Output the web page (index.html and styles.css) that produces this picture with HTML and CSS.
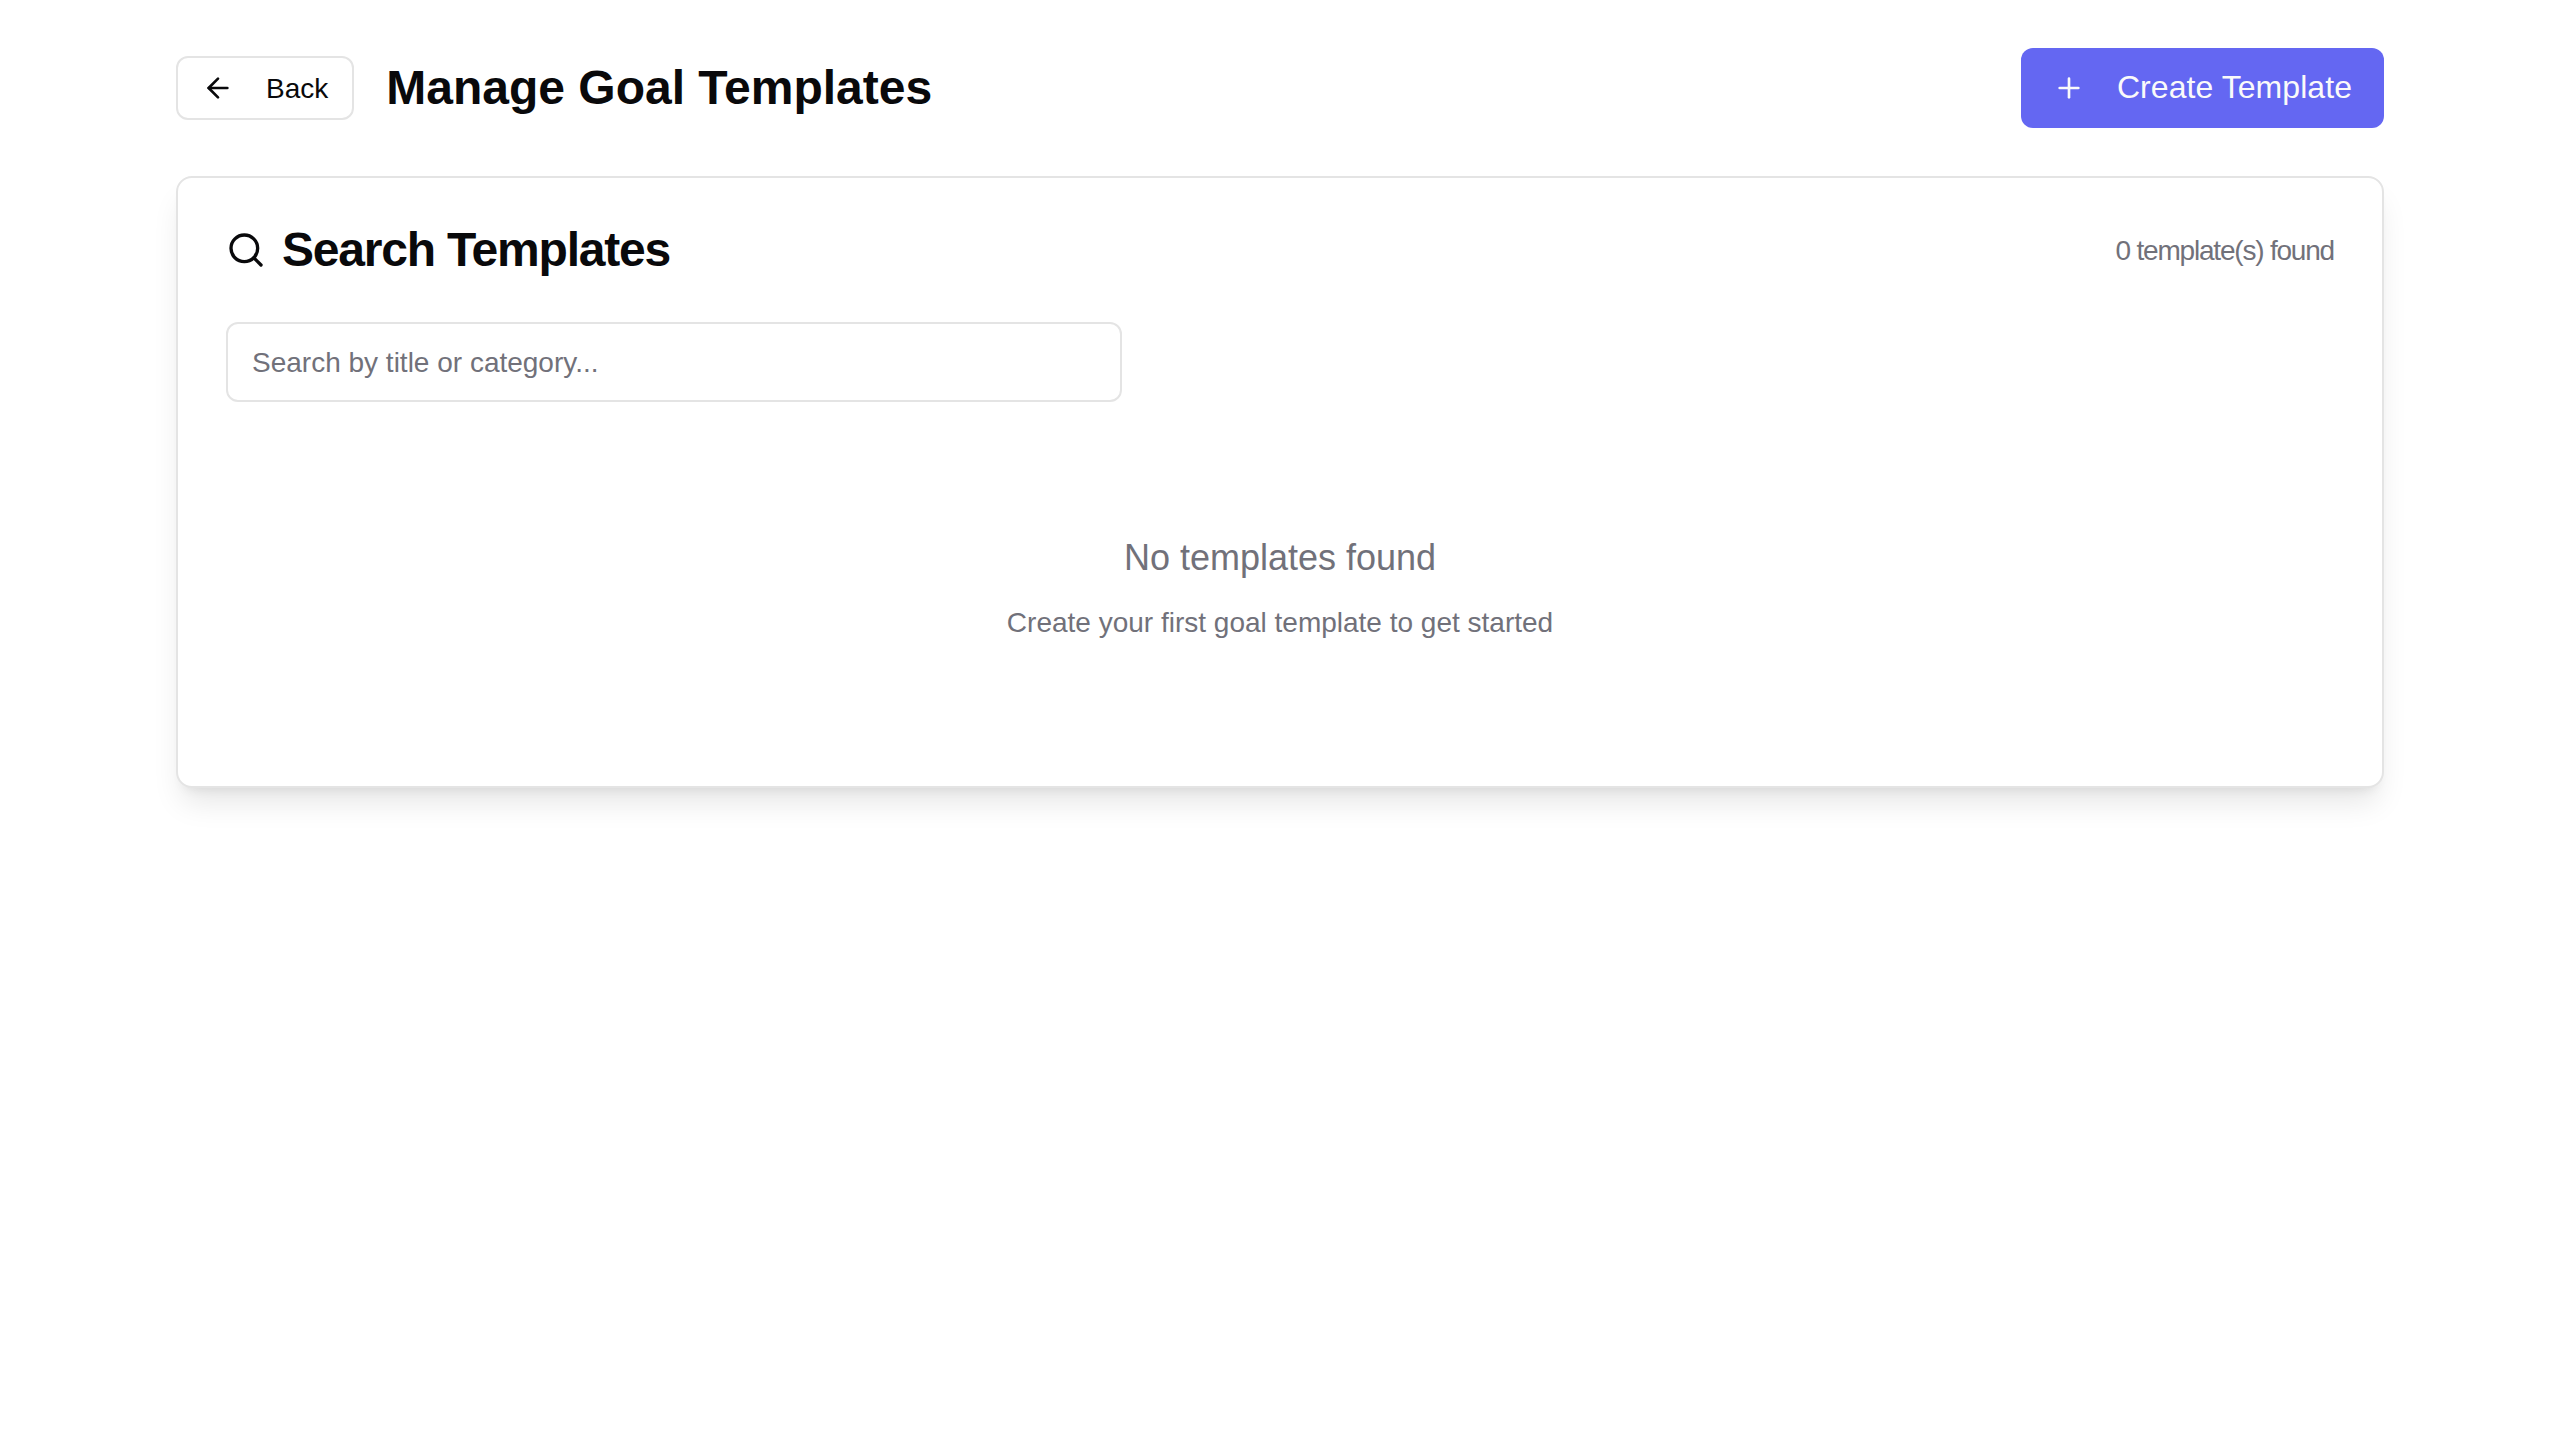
FILE: index.html
```
<!DOCTYPE html>
<html lang="en">
<head>
<meta charset="utf-8">
<title>Manage Goal Templates</title>
<link rel="stylesheet" href="styles.css">
</head>
<body>
<main class="page">
  <header class="page-header">
    <div class="heading">
      <button class="btn btn-outline" type="button">
        <svg class="icon" viewBox="0 0 24 24"><path d="m12 19-7-7 7-7"/><path d="M19 12H5"/></svg>
        <span class="label">Back</span>
      </button>
      <h1 class="page-title">Manage Goal Templates</h1>
    </div>
    <button class="btn btn-primary" type="button">
      <svg class="icon" viewBox="0 0 24 24"><path d="M5 12h14"/><path d="M12 5v14"/></svg>
      <span class="label">Create Template</span>
    </button>
  </header>
  <section class="card">
    <div class="card-header">
      <h2 class="card-title">
        <svg class="icon icon-search" viewBox="0 0 24 24"><circle cx="11" cy="11" r="8"/><path d="m21 21-4.3-4.3"/></svg>
        Search Templates
      </h2>
      <span class="count">0 template(s) found</span>
    </div>
    <input class="search" type="text" placeholder="Search by title or category...">
    <div class="empty">
      <p class="empty-title">No templates found</p>
      <p class="empty-text">Create your first goal template to get started</p>
    </div>
  </section>
</main>
</body>
</html>
```
FILE: styles.css
```
* {
  box-sizing: border-box;
  margin: 0;
}

body {
  background: #fff;
  color: #09090b;
  font-family: "Liberation Sans", Arial, sans-serif;
  font-size: 32px;
  line-height: 48px;
}

.page {
  padding: 48px 176px;
}

.page-header,
.card-header {
  display: flex;
  align-items: center;
  justify-content: space-between;
}

.page-header {
  margin-bottom: 48px;
}

.heading {
  display: flex;
  align-items: center;
  gap: 32px;
}

.page-title {
  font-size: 48px;
  font-weight: 700;
  line-height: 64px;
}

.btn {
  display: inline-flex;
  align-items: center;
  gap: 32px;
  border: 0;
  border-radius: 12px;
  font-family: inherit;
  white-space: nowrap;
}

.btn-outline {
  height: 64px;
  padding: 0 24px;
  border: 2px solid #e4e4e4;
  background: #fff;
  color: #09090b;
  font-size: 28px;
  line-height: 40px;
}

.btn-outline .label {
  padding-top: 2px;
}

.btn-primary {
  height: 80px;
  padding: 0 32px;
  background: #6467f2;
  color: #fafafa;
  font-size: 32px;
  letter-spacing: 0.06px;
  line-height: 48px;
}

.btn-primary .label {
  padding-bottom: 2px;
}

.icon {
  flex: none;
  width: 32px;
  height: 32px;
  fill: none;
  stroke: currentColor;
  stroke-width: 2;
  stroke-linecap: round;
  stroke-linejoin: round;
}

.icon-search {
  width: 40px;
  height: 40px;
}

.card {
  padding: 48px;
  border: 2px solid #e4e4e4;
  border-radius: 16px;
  background: #fff;
  box-shadow: 0 20px 30px -6px rgba(0, 0, 0, 0.1), 0 8px 12px -8px rgba(0, 0, 0, 0.1);
}

.card-header {
  margin-bottom: 48px;
  letter-spacing: -1.2px;
}

.card-title {
  display: flex;
  align-items: center;
  gap: 16px;
  font-size: 48px;
  font-weight: 600;
  line-height: 48px;
}

.count {
  padding-top: 2px;
  color: #71717a;
  font-size: 28px;
  line-height: 40px;
}

.search {
  display: block;
  width: 896px;
  height: 80px;
  padding: 2px 24px 0;
  border: 2px solid #e4e4e4;
  border-radius: 12px;
  background: #fff;
  font-family: inherit;
  font-size: 28px;
  line-height: 40px;
}

.search::placeholder {
  color: #71717a;
}

.empty {
  margin-top: 32px;
  padding: 96px 0 95px;
  color: #71717a;
  text-align: center;
}

.empty-title {
  margin-bottom: 17px;
  font-size: 36px;
  line-height: 56px;
}

.empty-text {
  font-size: 28px;
  line-height: 40px;
}
```
